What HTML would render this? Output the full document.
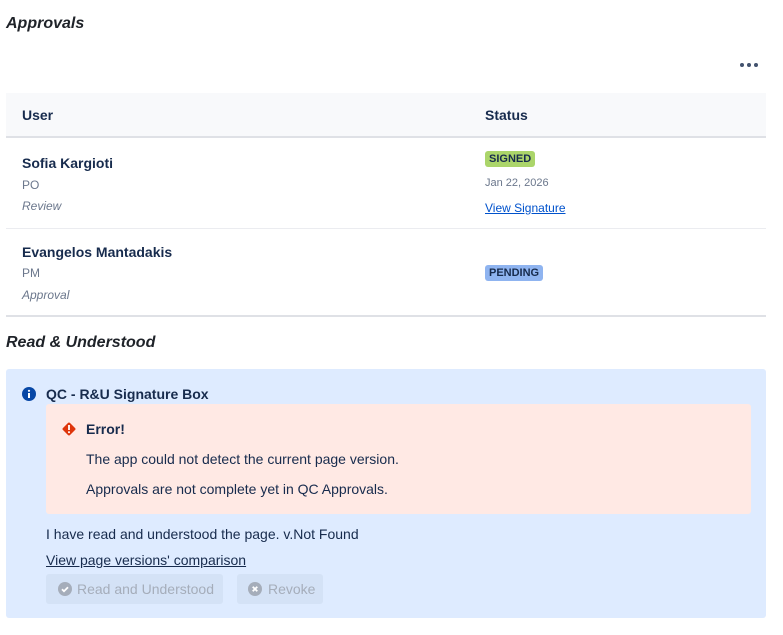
<!DOCTYPE html>
<html><head><style>
*{margin:0;padding:0;box-sizing:border-box}
body{width:783px;height:635px;background:#fff;font-family:"Liberation Sans",sans-serif;color:#172b4d;position:relative;overflow:hidden}
.abs{position:absolute}
h2{position:absolute;font-size:16px;font-style:italic;font-weight:bold;color:#1f2329}
.th{font-size:14px;font-weight:bold}
.name{font-size:14px;font-weight:bold}
.role{font-size:12px;color:#6b778c}
.ital{font-size:12px;font-style:italic;color:#6b778c}
.lozenge{position:absolute;font-size:11px;font-weight:bold;padding:2px 4px;border-radius:3px;color:#172b4d;line-height:12px}
</style></head><body>
<h2 style="left:6px;top:15px">Approvals</h2>
<div class="abs" style="left:740px;top:63px;width:20px;height:4px">
<span class="abs" style="left:0;top:0;width:4px;height:4px;border-radius:2px;background:#42526e"></span>
<span class="abs" style="left:7px;top:0;width:4px;height:4px;border-radius:2px;background:#42526e"></span>
<span class="abs" style="left:14px;top:0;width:4px;height:4px;border-radius:2px;background:#42526e"></span>
</div>
<div class="abs" style="left:6px;top:93px;width:760px;height:45px;background:#f8f9fb;border-bottom:2px solid #dfe1e6"></div>
<div class="abs th" style="left:22px;top:107px">User</div>
<div class="abs th" style="left:485px;top:107px">Status</div>

<div class="abs name" style="left:22px;top:155px">Sofia Kargioti</div>
<div class="abs role" style="left:22px;top:178px">PO</div>
<div class="abs ital" style="left:22px;top:199px">Review</div>
<div class="lozenge" style="left:485px;top:151px;background:#abd56a">SIGNED</div>
<div class="abs" style="left:485px;top:177px;font-size:11px;color:#6b778c">Jan 22, 2026</div>
<div class="abs" style="left:485px;top:201px;font-size:12px;color:#0052cc;text-decoration:underline">View Signature</div>
<div class="abs" style="left:6px;top:228px;width:760px;height:1px;background:#ebecf0"></div>

<div class="abs name" style="left:22px;top:244px">Evangelos Mantadakis</div>
<div class="abs role" style="left:22px;top:266px">PM</div>
<div class="abs ital" style="left:22px;top:288px">Approval</div>
<div class="lozenge" style="left:485px;top:265px;background:#8fb4f0">PENDING</div>
<div class="abs" style="left:6px;top:315px;width:760px;height:2px;background:#dfe1e6"></div>

<h2 style="left:6px;top:334px">Read &amp; Understood</h2>

<div class="abs" style="left:6px;top:369px;width:760px;height:249px;background:#deebff;border-radius:3px"></div>
<svg class="abs" style="left:22px;top:387px" width="14" height="14" viewBox="0 0 14 14"><circle cx="7" cy="7" r="7" fill="#0747a6"/><rect x="6" y="6" width="2" height="5" fill="#fff"/><circle cx="7" cy="3.8" r="1.1" fill="#fff"/></svg>
<div class="abs" style="left:46px;top:386px;font-size:14px;font-weight:bold;color:#172b4d">QC - R&amp;U Signature Box</div>
<div class="abs" style="left:46px;top:404px;width:705px;height:110px;background:#ffe9e4;border-radius:3px"></div>
<svg class="abs" style="left:61px;top:421px" width="16" height="16" viewBox="0 0 16 16"><rect x="3" y="3" width="10" height="10" transform="rotate(45 8 8)" rx="1.5" fill="#de350b"/><rect x="7.1" y="4" width="1.8" height="5" fill="#fff"/><rect x="7.1" y="10.3" width="1.8" height="1.8" fill="#fff"/></svg>
<div class="abs" style="left:86px;top:421px;font-size:14px;font-weight:bold">Error!</div>
<div class="abs" style="left:86px;top:451px;font-size:14px;color:#172b4d">The app could not detect the current page version.</div>
<div class="abs" style="left:86px;top:481px;font-size:14px;color:#172b4d">Approvals are not complete yet in QC Approvals.</div>
<div class="abs" style="left:46px;top:526px;font-size:14px;color:#172b4d">I have read and understood the page. v.Not Found</div>
<div class="abs" style="left:46px;top:552px;font-size:14px;color:#172b4d;text-decoration:underline">View page versions' comparison</div>
<div class="abs" style="left:46px;top:574px;width:177px;height:30px;background:#d4e2f6;border-radius:3px"></div>
<svg class="abs" style="left:58px;top:582px" width="14" height="14" viewBox="0 0 14 14"><circle cx="7" cy="7" r="7" fill="#a5adba"/><path d="M4 7.2l2 2 4-4" stroke="#fff" stroke-width="1.8" fill="none"/></svg>
<div class="abs" style="left:77px;top:581px;font-size:14px;color:#a5adba">Read and Understood</div>
<div class="abs" style="left:237px;top:574px;width:86px;height:30px;background:#d4e2f6;border-radius:3px"></div>
<svg class="abs" style="left:248px;top:582px" width="14" height="14" viewBox="0 0 14 14"><circle cx="7" cy="7" r="7" fill="#a5adba"/><path d="M4.7 4.7l4.6 4.6M9.3 4.7l-4.6 4.6" stroke="#fff" stroke-width="1.8"/></svg>
<div class="abs" style="left:268px;top:581px;font-size:14px;color:#a5adba">Revoke</div>
</body></html>
